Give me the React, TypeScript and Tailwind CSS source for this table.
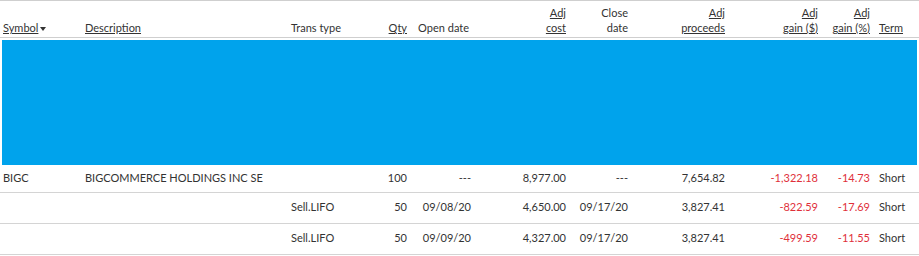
import React from 'react';

type Lot = {
  symbol: string;
  description: string;
  transType: string;
  qty: string;
  openDate: string;
  cost: string;
  closeDate: string;
  proceeds: string;
  gain: string;
  gainPct: string;
  term: string;
};

const lots: Lot[] = [
  {
    symbol: 'BIGC',
    description: 'BIGCOMMERCE HOLDINGS INC SE',
    transType: '',
    qty: '100',
    openDate: '---',
    cost: '8,977.00',
    closeDate: '---',
    proceeds: '7,654.82',
    gain: '-1,322.18',
    gainPct: '-14.73',
    term: 'Short',
  },
  {
    symbol: '',
    description: '',
    transType: 'Sell.LIFO',
    qty: '50',
    openDate: '09/08/20',
    cost: '4,650.00',
    closeDate: '09/17/20',
    proceeds: '3,827.41',
    gain: '-822.59',
    gainPct: '-17.69',
    term: 'Short',
  },
  {
    symbol: '',
    description: '',
    transType: 'Sell.LIFO',
    qty: '50',
    openDate: '09/09/20',
    cost: '4,327.00',
    closeDate: '09/17/20',
    proceeds: '3,827.41',
    gain: '-499.59',
    gainPct: '-11.55',
    term: 'Short',
  },
];

const th = 'h-[37px] align-bottom pb-[2px] font-normal leading-[15px]';
const td = 'leading-[15px] align-middle pb-[2px]';

export default function App() {
  return (
    <div className="w-[919px] bg-white text-[11px] text-[#333]" style={{ fontFamily: 'Lato, "Liberation Sans", sans-serif' }}>
      <table className="w-full table-fixed border-collapse">
        <colgroup>
          <col className="w-[82px]" />
          <col className="w-[206px]" />
          <col className="w-[57px]" />
          <col className="w-[65px]" />
          <col className="w-[64px]" />
          <col className="w-[95px]" />
          <col className="w-[62px]" />
          <col className="w-[97px]" />
          <col className="w-[93px]" />
          <col className="w-[55px]" />
          <col className="w-[43px]" />
        </colgroup>
        <thead>
          <tr className="border-t border-b border-[#cfcfcf]">
            <th className={`${th} pl-[3px] text-left`}>
              <span className="underline">Symbol</span>
              <span className="ml-[2px] inline-block h-0 w-0 border-x-[3px] border-t-[4px] border-x-transparent border-t-[#333] align-middle" />
            </th>
            <th className={`${th} pl-[3px] text-left`}>
              <span className="underline">Description</span>
            </th>
            <th className={`${th} pl-[3px] text-left whitespace-nowrap`}>Trans type</th>
            <th className={`${th} pr-[3px] text-right`}>
              <span className="underline">Qty</span>
            </th>
            <th className={`${th} pr-[5px] text-right whitespace-nowrap`}>Open date</th>
            <th className={`${th} pr-[3px] text-right`}>
              <span className="underline">Adj</span>
              <br />
              <span className="underline">cost</span>
            </th>
            <th className={`${th} pr-[3px] text-right`}>
              Close
              <br />
              date
            </th>
            <th className={`${th} pr-[3px] text-right`}>
              <span className="underline">Adj</span>
              <br />
              <span className="underline">proceeds</span>
            </th>
            <th className={`${th} pr-[3px] text-right whitespace-nowrap`}>
              <span className="underline">Adj</span>
              <br />
              <span className="underline">gain ($)</span>
            </th>
            <th className={`${th} pr-[6px] text-right whitespace-nowrap`}>
              <span className="underline">Adj</span>
              <br />
              <span className="underline">gain (%)</span>
            </th>
            <th className={`${th} pl-[3px] text-left`}>
              <span className="underline">Term</span>
            </th>
          </tr>
        </thead>
        <tbody>
          <tr>
            <td colSpan={11} className="px-[2px] pt-[2px]">
              <div className="h-[125px] bg-[#00a3ec]" />
            </td>
          </tr>
          {lots.map((lot, i) => (
            <tr key={i} className={`border-b border-[#d4d4d4] ${i === 0 ? 'h-[27px]' : 'h-[31px]'}`}>
              <td className={`${td} pl-[3px]`}>{lot.symbol}</td>
              <td className={`${td} pl-[3px] whitespace-nowrap`}>{lot.description}</td>
              <td className={`${td} pl-[3px] whitespace-nowrap`}>{lot.transType}</td>
              <td className={`${td} pr-[3px] text-right`}>{lot.qty}</td>
              <td className={`${td} pr-[3px] text-right`}>{lot.openDate}</td>
              <td className={`${td} pr-[3px] text-right`}>{lot.cost}</td>
              <td className={`${td} pr-[3px] text-right`}>{lot.closeDate}</td>
              <td className={`${td} pr-[3px] text-right`}>{lot.proceeds}</td>
              <td className={`${td} pr-[3px] text-right text-[#e0303a]`}>{lot.gain}</td>
              <td className={`${td} pr-[6px] text-right text-[#e0303a]`}>{lot.gainPct}</td>
              <td className={`${td} pl-[3px]`}>{lot.term}</td>
            </tr>
          ))}
        </tbody>
      </table>
    </div>
  );
}
